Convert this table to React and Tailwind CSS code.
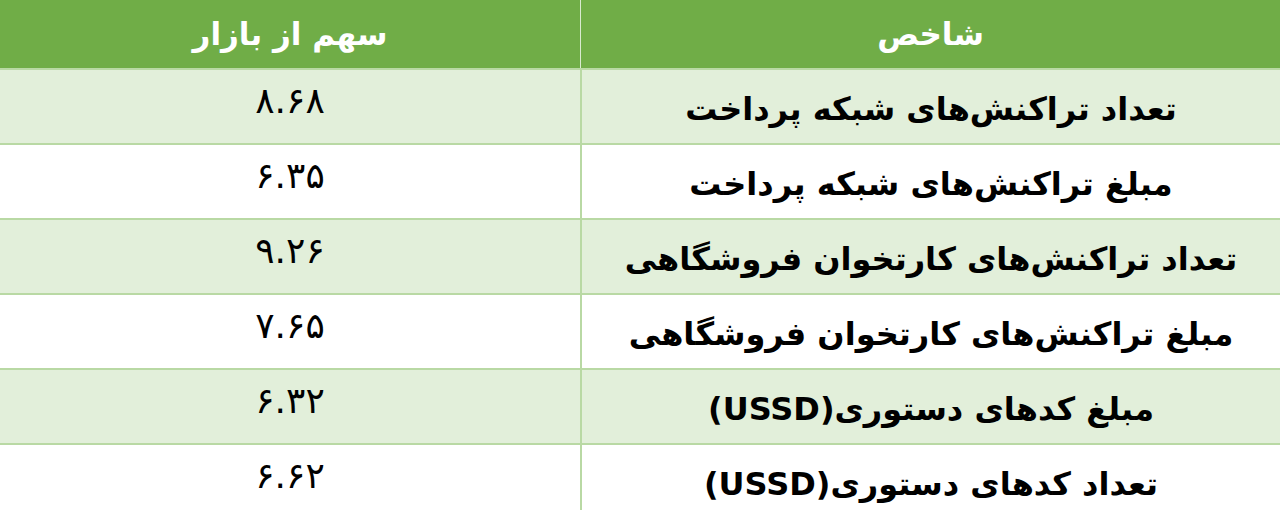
const rows = [
  { label: 'تعداد تراکنش‌های شبکه پرداخت', value: '۸.۶۸' },
  { label: 'مبلغ تراکنش‌های شبکه پرداخت', value: '۶.۳۵' },
  { label: 'تعداد تراکنش‌های کارتخوان فروشگاهی', value: '۹.۲۶' },
  { label: 'مبلغ تراکنش‌های کارتخوان فروشگاهی', value: '۷.۶۵' },
  { label: 'مبلغ کدهای دستوری(USSD)', value: '۶.۳۲' },
  { label: 'تعداد کدهای دستوری(USSD)', value: '۶.۶۲' },
];

export default function App() {
  return (
    <div
      dir="rtl"
      className="w-[1280px] h-[510px] overflow-hidden bg-white"
      style={{ fontFamily: '"DejaVu Sans", "Noto Sans", sans-serif' }}
    >
      {/* Header */}
      <div className="grid grid-cols-[700px_580px] h-[68px] bg-[#70ad47] text-white font-bold text-[31px]">
        <div className="flex items-center justify-center border-l border-[#d9ead0]">شاخص</div>
        <div className="flex items-center justify-center">سهم از بازار</div>
      </div>

      {/* Rows */}
      {rows.map((row, i) => (
        <div
          key={i}
          className={`grid grid-cols-[700px_580px] h-[75px] border-t-2 border-[#b9d9a4] ${
            i % 2 === 0 ? 'bg-[#e2efda]' : 'bg-white'
          }`}
        >
          <div className="flex items-center justify-center border-l-2 border-[#b9d9a4] text-black font-bold text-[32px] pt-1">
            {row.label}
          </div>
          <div className="flex items-center justify-center text-black text-[36px] pb-3">
            {row.value}
          </div>
        </div>
      ))}
    </div>
  );
}
